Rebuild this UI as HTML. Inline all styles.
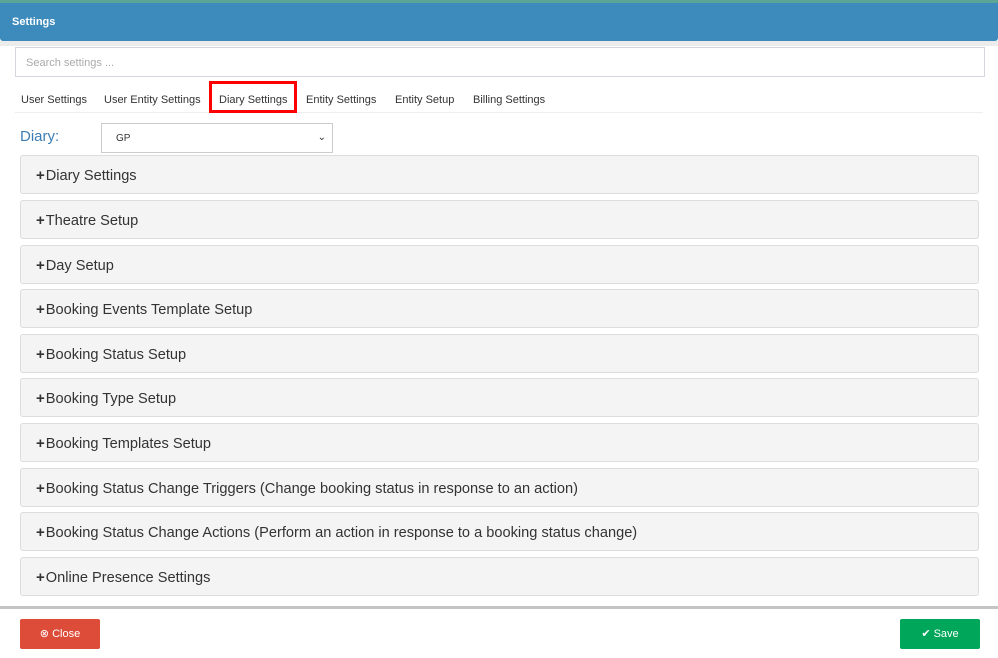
<!DOCTYPE html><html><head><style>
body{margin:0;width:998px;height:658px;background:#fff;font-family:"Liberation Sans",sans-serif;position:relative;overflow:hidden}
.top{position:absolute;left:0;top:0;width:998px;height:3px;background:#5aa596}
.hdr{position:absolute;left:0;top:3px;width:998px;height:38px;background:#3d8bbd;border-radius:0 0 3px 3px}
.hdr span{position:absolute;left:12px;top:13px;color:#fff;font-weight:bold;font-size:11px}
.gray{position:absolute;left:0;top:41px;width:998px;height:5px;background:#ececec}
.search{position:absolute;left:15px;top:47px;width:970px;height:30px;border:1px solid #d5d5dd;box-sizing:border-box;font-size:11px;color:#aaa;padding:9px 10px}
.tabs{position:absolute;left:15px;top:84px;width:968px;height:28px;border-bottom:1px solid #eee;font-size:11px;color:#333}
.tabs span{position:absolute;top:10px}
.red{position:absolute;left:209px;top:81px;width:88px;height:32px;border:3px solid #f00;box-sizing:border-box}
.lbl{position:absolute;left:20px;top:128px;color:#3d7fb5;font-size:15px}
.sel{position:absolute;left:101px;top:123px;width:232px;height:30px;border:1px solid #ccc;box-sizing:border-box;font-size:10px;padding:9px 14px;color:#333}
.sel i{position:absolute;right:6px;top:8px;font-style:normal;font-size:10px}
.p{position:absolute;left:20px;width:959px;height:39px;background:#f4f4f4;border:1px solid #ddd;border-radius:3px;box-sizing:border-box;font-size:14.6px;color:#333;padding:11px 0 0 15px}
.p b{font-size:15px;margin-right:1px}
.line{position:absolute;left:0;top:606px;width:998px;height:3px;background:#c4c4c4}
.btn{position:absolute;top:619px;height:30px;border-radius:2px;color:#fff;font-size:11px;line-height:30px;text-align:center}
</style></head><body>
<div class="top"></div><div class="hdr"><span>Settings</span></div><div class="gray"></div>
<div class="search">Search settings ...</div>
<div class="tabs"><span style="left:6px">User Settings</span><span style="left:89px">User Entity Settings</span><span style="left:204px">Diary Settings</span><span style="left:291px">Entity Settings</span><span style="left:380px">Entity Setup</span><span style="left:458px">Billing Settings</span></div>
<div class="red"></div>
<div class="lbl">Diary:</div>
<div class="sel">GP<i>&#x2304;</i></div>
<div class="p" style="top:155px"><b>+</b>Diary Settings</div>
<div class="p" style="top:200px"><b>+</b>Theatre Setup</div>
<div class="p" style="top:245px"><b>+</b>Day Setup</div>
<div class="p" style="top:289px"><b>+</b>Booking Events Template Setup</div>
<div class="p" style="top:334px"><b>+</b>Booking Status Setup</div>
<div class="p" style="top:378px"><b>+</b>Booking Type Setup</div>
<div class="p" style="top:423px"><b>+</b>Booking Templates Setup</div>
<div class="p" style="top:468px"><b>+</b>Booking Status Change Triggers (Change booking status in response to an action)</div>
<div class="p" style="top:512px"><b>+</b>Booking Status Change Actions (Perform an action in response to a booking status change)</div>
<div class="p" style="top:557px"><b>+</b>Online Presence Settings</div>
<div class="line"></div>
<div class="btn" style="left:20px;width:80px;background:#dd4b39">&#x2297; Close</div>
<div class="btn" style="left:900px;width:80px;background:#00a65a">&#x2714; Save</div>
</body></html>
